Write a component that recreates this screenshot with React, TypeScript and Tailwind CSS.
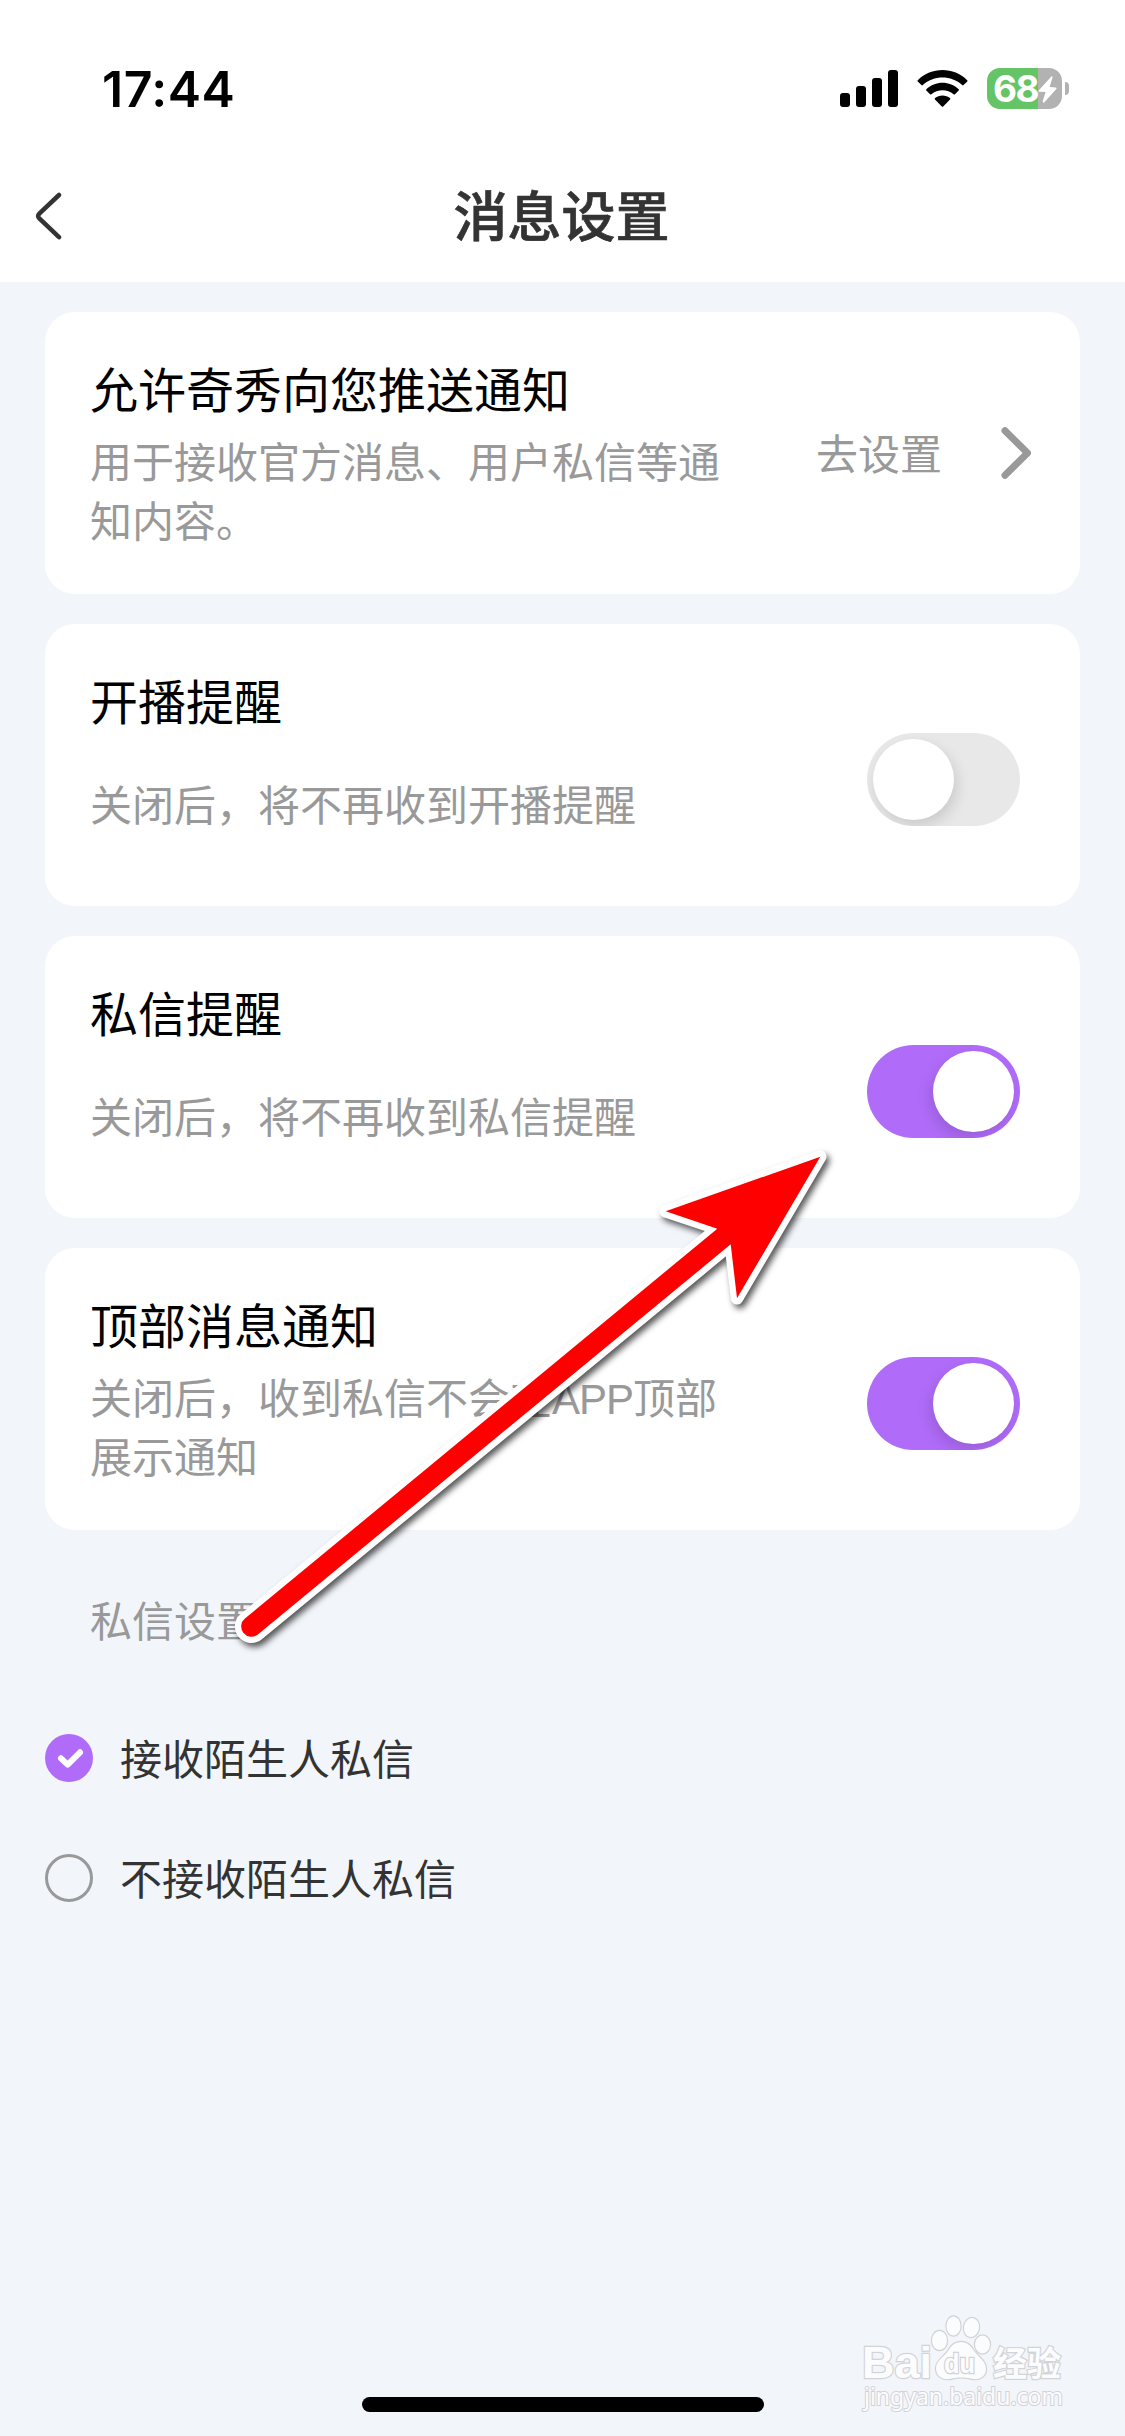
import { useState, type ReactNode } from 'react';

function StatusBar() {
  return (
    <div className="flex h-[150px] items-start justify-between pl-[102px] pr-[56px] pt-[68px]">
      <div className="mt-[-9px] font-['Inter'] text-[50px] leading-[60px] font-semibold tracking-[0.5px] text-black">
        17:44
      </div>
      <div className="flex">
        <svg className="mt-[2px] h-[37px] w-[58px]" viewBox="0 0 58 37">
          <rect x="0" y="23" width="10" height="14" rx="3" />
          <rect x="16" y="16" width="10" height="21" rx="3" />
          <rect x="32" y="8" width="10" height="29" rx="3" />
          <rect x="48" y="0" width="10" height="37" rx="3" />
        </svg>
        <svg className="mt-[2px] ml-[19px] h-[37px] w-[51px]" viewBox="0 0 51 37">
          <path d="M0.8 10.2C14 -3.4 37 -3.4 50.2 10.2Q50.8 10.9 50.2 11.6L46.6 15.1Q45.9 15.7 45.2 15.1C34.5 4.9 16.5 4.9 5.8 15.1Q5.1 15.7 4.4 15.1L0.8 11.6Q0.2 10.9 0.8 10.2Z" />
          <path d="M9.3 19.2C18.2 10.5 32.8 10.5 41.7 19.2Q42.3 19.9 41.7 20.6L38 24.2Q37.3 24.8 36.6 24.2C30.5 18.9 20.5 18.9 14.4 24.2Q13.7 24.8 13 24.2L9.3 20.6Q8.7 19.9 9.3 19.2Z" />
          <path d="M18 28.1C22.2 24.5 28.8 24.5 33 28.1Q33.6 28.8 33 29.5L26.2 36.4Q25.5 37 24.8 36.4L18 29.5Q17.4 28.8 18 28.1Z" />
        </svg>
        <div className="ml-[19px] flex h-[41px] items-center">
          <div className="relative flex h-[41px] w-[75px] items-center rounded-[13px] bg-[#b2b2b2] bg-linear-to-r from-[#65c466] from-[51px] to-[#b2b2b2] to-[51px]">
            <span className="ml-[6px] font-['Inter'] text-[37px] leading-[41px] font-bold tracking-[-1.5px] text-white">
              68
            </span>
            <svg className="absolute top-[8px] left-[51px] h-[27px] w-[19px]" viewBox="0 0 19 27">
              <path
                d="M13.6 0.3L0.6 14.4Q0 15.6 1.2 15.7L7.6 15.9L4.6 25.6Q4.8 27 6.2 26.4L18.5 12.7Q19 11.6 17.8 11.4L11.6 11L14.6 1.3Q14.6 0 13.6 0.3Z"
                fill="#fff"
              />
            </svg>
          </div>
          <div className="ml-[3px] h-[13px] w-[4px] rounded-r-full bg-[#b2b2b2]" />
        </div>
      </div>
    </div>
  );
}

function NavBar() {
  return (
    <div className="grid h-[132px] grid-cols-[150px_1fr_150px] items-center">
      <button className="pl-[35px]" aria-label="返回">
        <svg className="h-[48px] w-[28px]" viewBox="0 0 28 48">
          <path
            d="M24 3L4.3 21.6Q1.9 24 4.3 26.4L24 45.2"
            fill="none"
            stroke="#333"
            strokeWidth="4.5"
            strokeLinecap="round"
          />
        </svg>
      </button>
      <h1 className="mt-[3px] mr-[2px] text-center text-[54px] leading-[60px] font-medium text-[#333] [-webkit-text-stroke:0.7px_#333]">
        消息设置
      </h1>
    </div>
  );
}

function Toggle({ initial }: { initial: boolean }) {
  const [on, setOn] = useState(initial);
  return (
    <button
      role="switch"
      aria-checked={on}
      onClick={() => setOn(!on)}
      className={
        on
          ? 'mt-[109px] flex h-[93px] w-[153px] justify-end overflow-hidden rounded-full bg-[#b06cf9] p-[6px]'
          : 'mt-[109px] flex h-[93px] w-[153px] justify-start overflow-hidden rounded-full bg-[#e8e8e8] p-[6px]'
      }
    >
      <span
        className={
          on
            ? 'size-[81px] rounded-full bg-white shadow-[-3px_6px_14px_rgba(0,0,0,0.13)]'
            : 'size-[81px] rounded-full bg-white shadow-[3px_6px_14px_rgba(0,0,0,0.13)]'
        }
      />
    </button>
  );
}

function Card({ title, lines, children }: { title: string; lines: string[]; children: ReactNode }) {
  return (
    <section className="flex h-[282px] items-start justify-between rounded-[30px] bg-white pr-[60px] pl-[45px]">
      <div className="pt-[46px]">
        <h2 className="text-[48px] leading-[68px] text-black">{title}</h2>
        <div className={lines.length > 1 ? 'pt-[9px]' : 'pt-[40px]'}>
          {lines.map((line) => (
            <p key={line} className="text-[42px] leading-[58.7px] whitespace-nowrap text-[#999]">
              {line.split('APP').map((part, i) => (
                <span key={part}>
                  {i > 0 && <span className="tracking-[-1px]">APP</span>}
                  {part}
                </span>
              ))}
            </p>
          ))}
        </div>
      </div>
      {children}
    </section>
  );
}

function Radio({ label, checked, onSelect }: { label: string; checked: boolean; onSelect: () => void }) {
  return (
    <button role="radio" aria-checked={checked} onClick={onSelect} className="flex h-[120px] items-center">
      {checked ? (
        <svg className="size-[48px]" viewBox="0 0 48 48">
          <circle cx="24" cy="24" r="24" fill="#b06cf9" />
          <path
            d="M16 24.3L22.7 30.7L35 18.3"
            fill="none"
            stroke="#fff"
            strokeWidth="6"
            strokeLinecap="round"
            strokeLinejoin="round"
          />
        </svg>
      ) : (
        <span className="size-[48px] rounded-full border-[3px] border-[#999]" />
      )}
      <span className="mt-[5px] ml-[27px] text-[42px] leading-[60px] text-[#333]">{label}</span>
    </button>
  );
}

function PointerArrow() {
  return (
    <svg
      className="pointer-events-none absolute top-[1130px] left-[220px] h-[530px] w-[630px] drop-shadow-[3px_4px_3px_rgba(0,0,0,0.65)]"
      viewBox="220 1130 630 530"
    >
      <path
        d="M820.3 1156.7L665.7 1211.3L717.3 1228.7L244.9 1618.6A10.2 10.2 0 0 0 257.9 1634.4L730.7 1244.3L737 1298.3Z"
        fill="#f00"
        stroke="#fff"
        strokeWidth="12.5"
        strokeLinejoin="round"
        paintOrder="stroke"
      />
    </svg>
  );
}

function Watermark() {
  return (
    <svg
      className="pointer-events-none absolute top-[2310px] left-[855px] h-[110px] w-[220px]"
      viewBox="855 2310 220 110"
      fill="#fbfcfe"
      stroke="#d2d3d6"
      strokeWidth="2.4"
      paintOrder="stroke"
    >
      <text x="862" y="2378" fontSize="45" fontWeight="700" fontFamily="Liberation Sans" textLength="70" lengthAdjust="spacingAndGlyphs">
        Bai
      </text>
      <g>
        <ellipse cx="939.5" cy="2340.5" rx="7.5" ry="9.5" />
        <ellipse cx="953.5" cy="2326" rx="7" ry="9.5" />
        <ellipse cx="971.5" cy="2327.5" rx="7.5" ry="9.5" transform="rotate(10 971.5 2327.5)" />
        <ellipse cx="982.5" cy="2344.5" rx="7.5" ry="9" />
        <path d="M950 2348C955 2340 967 2340 972 2348C977 2357 986 2360 986 2369C986 2376 980 2380 973 2379C966 2377 957 2377 950 2379C942 2380 936 2376 936 2368C936 2360 946 2356 950 2348Z" />
      </g>
      <text x="944" y="2373" fontSize="28" fontWeight="700" fontFamily="Liberation Sans" textLength="31" lengthAdjust="spacingAndGlyphs" strokeWidth="2.6">
        du
      </text>
      <text x="993" y="2376" fontSize="34" fontWeight="700" fontFamily="Noto Sans CJK SC">
        经验
      </text>
      <text x="864" y="2405" fontSize="23" fontFamily="Noto Sans" textLength="199" lengthAdjust="spacingAndGlyphs" strokeWidth="2">
        jingyan.baidu.com
      </text>
    </svg>
  );
}

export default function App() {
  const [choice, setChoice] = useState(0);
  return (
    <div className="relative flex h-[2436px] w-[1125px] flex-col overflow-hidden bg-[#f2f5fa] font-['Liberation_Sans','Noto_Sans_CJK_SC',sans-serif]">
      <header className="bg-white">
        <StatusBar />
        <NavBar />
      </header>
      <main className="flex flex-1 flex-col px-[45px] pt-[30px]">
        <div className="flex flex-col gap-[30px]">
          <Card title="允许奇秀向您推送通知" lines={['用于接收官方消息、用户私信等通', '知内容。']}>
            <button className="mr-[-16px] flex h-[282px] items-center text-[42px] text-[#999]">
              <span className="mt-[5px] leading-[60px]">去设置</span>
              <svg className="ml-[58px] h-[54px] w-[36px]" viewBox="0 0 36 54">
                <path d="M5 4.8L27.5 27L5 49.2" fill="none" stroke="#999" strokeWidth="7" strokeLinecap="round" strokeLinejoin="round" />
              </svg>
            </button>
          </Card>
          <Card title="开播提醒" lines={['关闭后，将不再收到开播提醒']}>
            <Toggle initial={false} />
          </Card>
          <Card title="私信提醒" lines={['关闭后，将不再收到私信提醒']}>
            <Toggle initial={true} />
          </Card>
          <Card title="顶部消息通知" lines={['关闭后，收到私信不会在APP顶部', '展示通知']}>
            <Toggle initial={true} />
          </Card>
        </div>
        <h3 className="mt-[63px] ml-[45px] text-[42px] leading-[60px] text-[#999]">私信设置</h3>
        <div role="radiogroup" className="mt-[45px] flex flex-col items-start">
          <Radio label="接收陌生人私信" checked={choice === 0} onSelect={() => setChoice(0)} />
          <Radio label="不接收陌生人私信" checked={choice === 1} onSelect={() => setChoice(1)} />
        </div>
      </main>
      <div className="mb-[24px] h-[15px] w-[402px] self-center rounded-full bg-black" />
      <Watermark />
      <PointerArrow />
    </div>
  );
}
